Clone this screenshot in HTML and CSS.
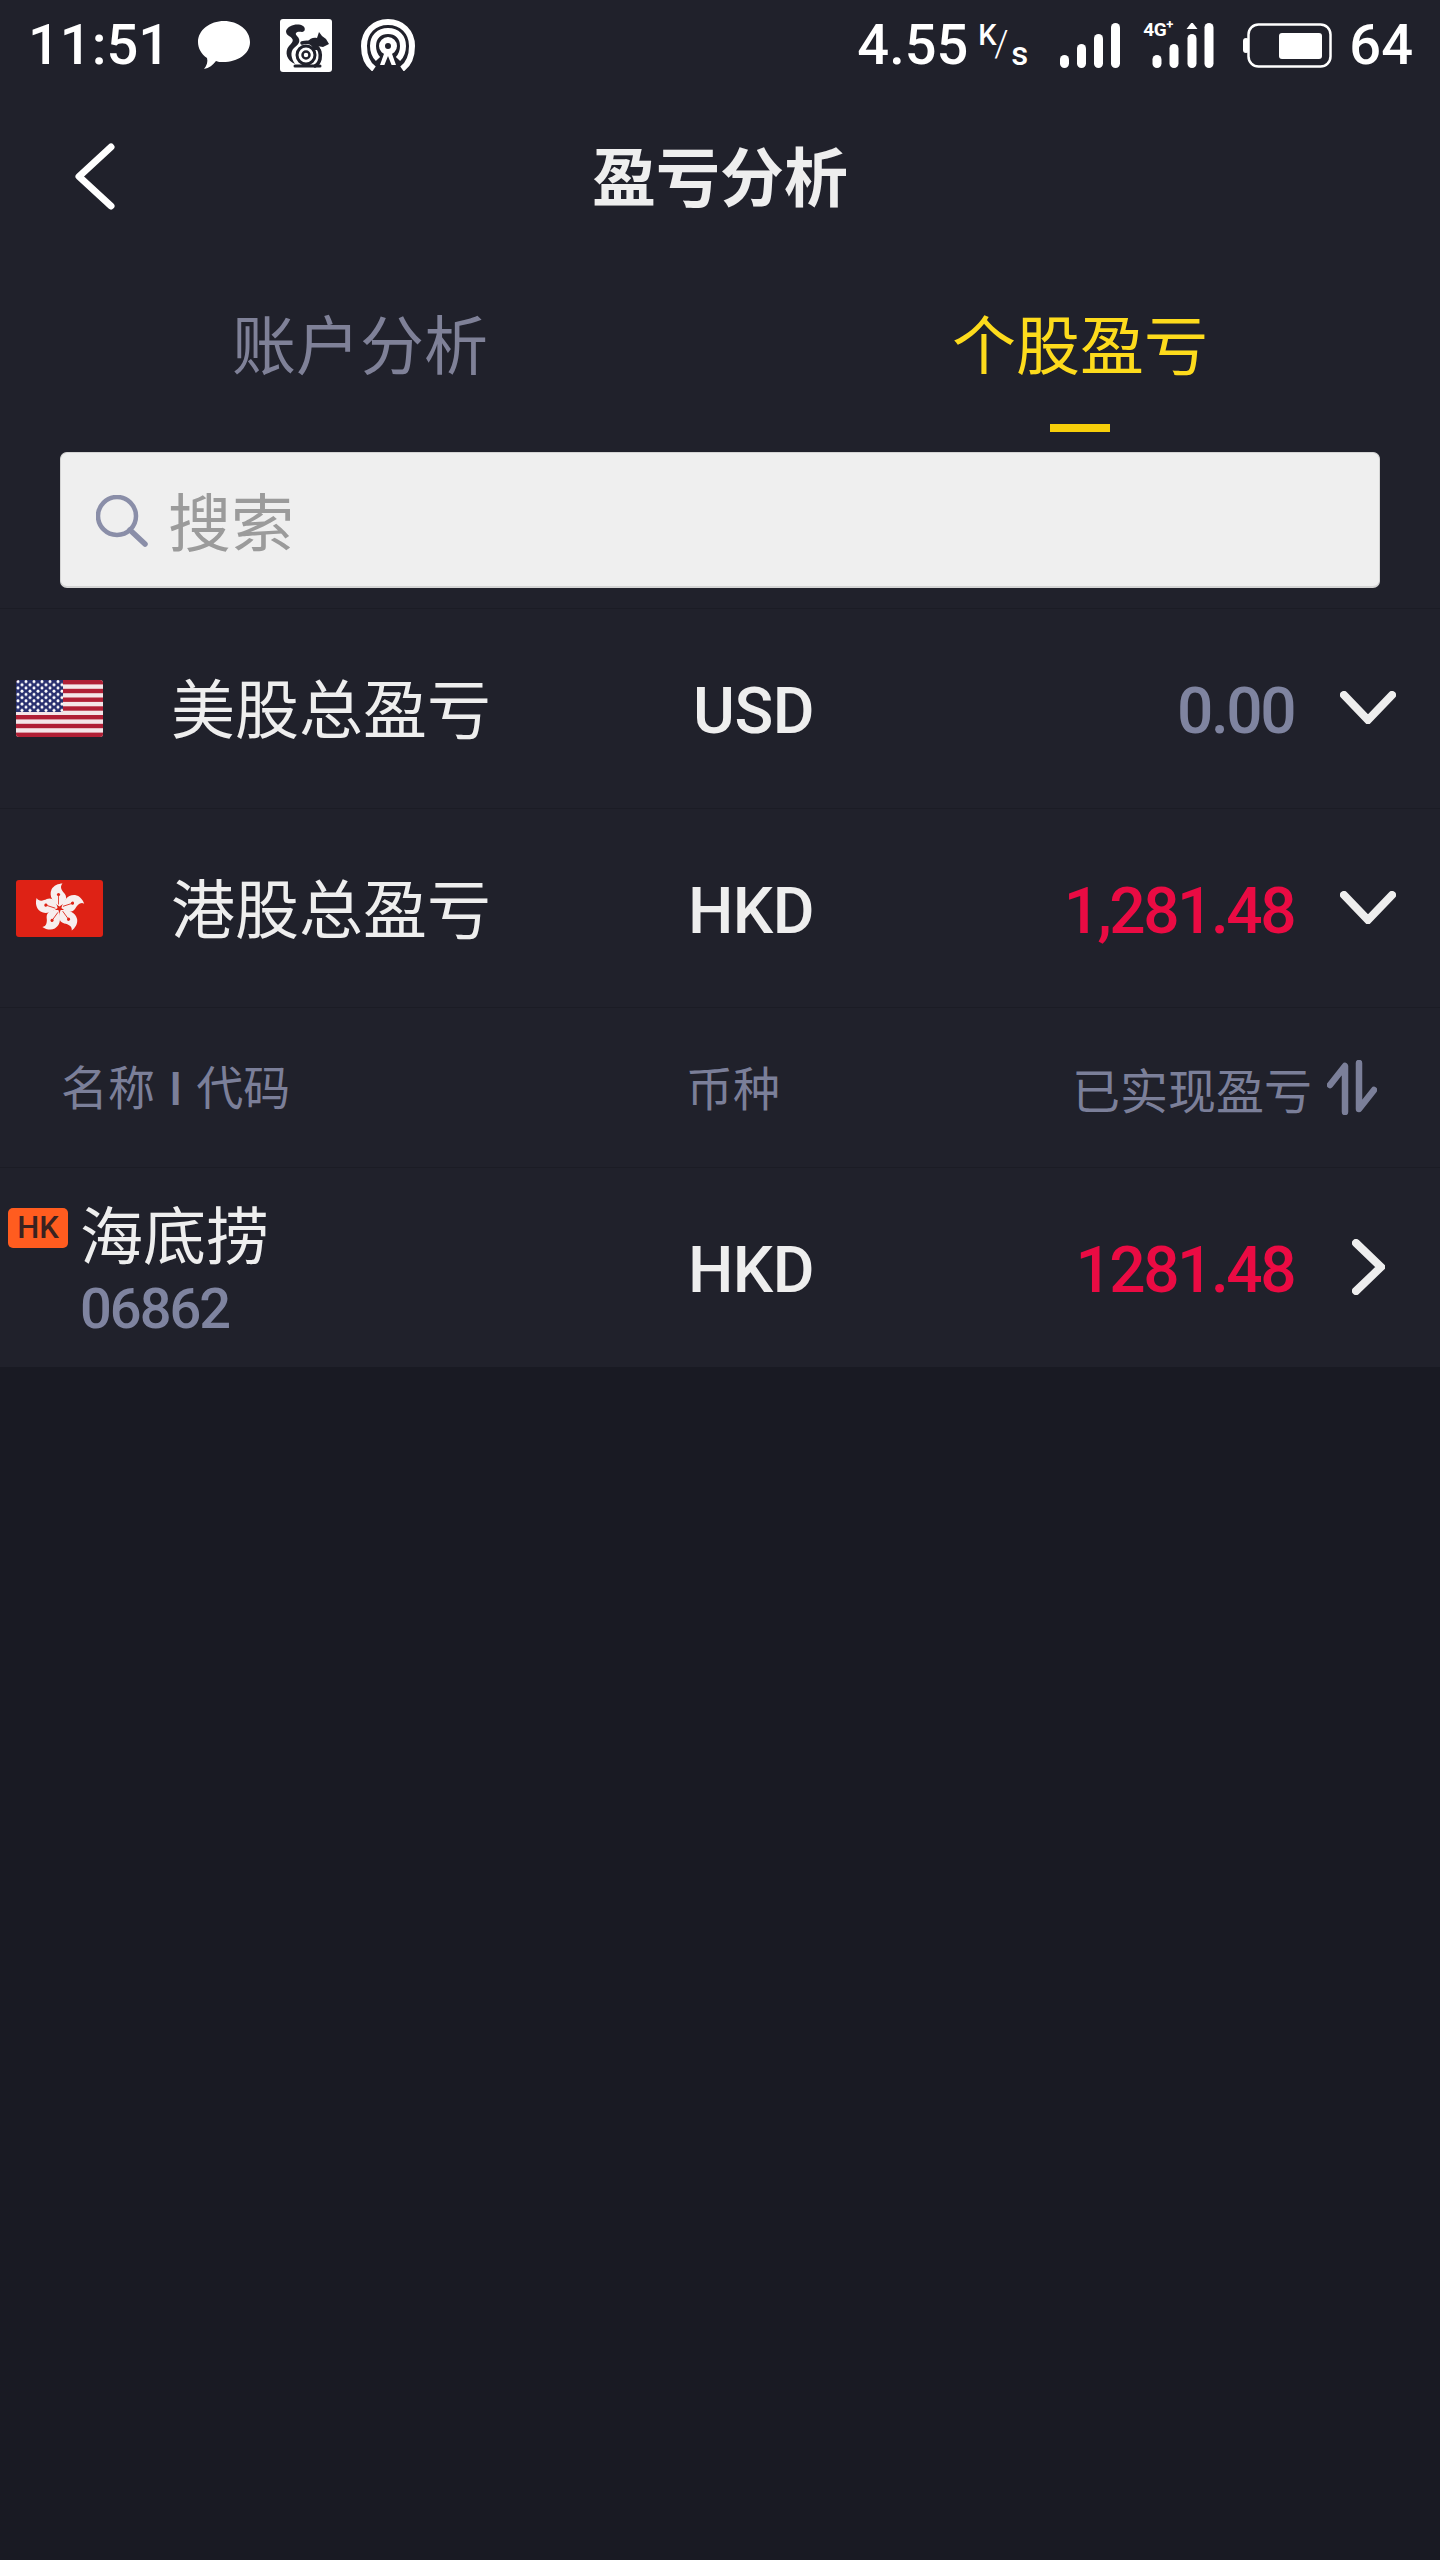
FILE: index.html
```html
<!DOCTYPE html>
<html lang="zh-CN">
<head>
<meta charset="utf-8">
<title>盈亏分析</title>
<link rel="stylesheet" href="styles.css">
</head>
<body>
<div class="app">
  <header class="top">
    <div class="status">
      <div class="status-left">
        <span class="clock">11:51</span>
        <svg class="ic-bubble" viewBox="0 0 52 48"><path d="M26 0C40 0 52 9 52 21C52 33 40 41 25 41C22 41 20 41 18 40C15 44 11 47 6 48C9 44 10 41 9 37C3 33 0 27 0 21C0 9 12 0 26 0Z" fill="#fff"/></svg>
        <svg class="ic-uc" viewBox="0 0 52 53">
          <rect width="52" height="53" rx="3" fill="#fff"/>
          <path d="M6 12C8 6 18 4 23 7C26 9 25 13 22 13C17 12 14 14 17 17C22 22 18 26 14 29C10 33 11 39 15 45C7 42 4 33 9 27C14 22 14 20 9 17C7 16 6 14 6 12Z" fill="#20212b"/>
          <g fill="none" stroke="#20212b" stroke-linecap="round">
            <circle cx="26" cy="36" r="9" stroke-width="3"/>
            <circle cx="26" cy="36" r="3.500" stroke-width="2.500"/>
            <path d="M22 24C32 21 42 28 40 40C39 44 37 46 35 47" stroke-width="3.500"/>
            <path d="M15 47H40" stroke-width="3"/>
          </g>
          <path d="M27 23C30 19 34 18 37 19L39 13L42 17L46 20L49 25L43 28L37 27L41 31L34 31C32 27 30 25 27 23Z" fill="#20212b"/>
        </svg>
        <svg class="ic-cast" viewBox="0 0 54 52">
          <g fill="none" stroke="#fff" stroke-width="6">
            <path d="M13 50C6 45 3 36 3 27C3 13 13 3 27 3C41 3 51 13 51 27C51 36 48 45 41 50"/>
            <path d="M17 40C13 36 12 32 12 27C12 18 18 12 27 12C36 12 42 18 42 27C42 32 41 36 37 40"/>
            <circle cx="27" cy="27" r="6"/>
          </g>
          <path d="M23 35H31L40 52H14Z" fill="#20212b"/>
          <path d="M24 32H30L35 46H19Z" fill="#fff"/>
          <path d="M27 37L33 52H21Z" fill="#20212b"/>
        </svg>
      </div>
      <div class="status-right">
        <span class="speed">4.55</span>
        <span class="unit"><span class="unit-k">K</span><span class="unit-slash">/</span><span class="unit-s">s</span></span>
        <svg class="ic-signal" viewBox="0 0 60 45"><g fill="#fff"><rect x="0" y="32" width="9" height="13" rx="4.500"/><rect x="17" y="21" width="9" height="24" rx="4.500"/><rect x="34" y="11" width="9" height="34" rx="4.500"/><rect x="51" y="0" width="9" height="45" rx="4.500"/></g></svg>
        <span class="net">
          <span class="net-label">4G<sup class="net-plus">+</sup></span>
          <svg class="ic-net" viewBox="0 0 61 45"><g fill="#fff"><rect x="0" y="32" width="9" height="13" rx="4.500"/><rect x="17" y="21" width="9" height="24" rx="4.500"/><rect x="35" y="11" width="9" height="34" rx="4.500"/><rect x="52" y="0" width="9" height="45" rx="4.500"/><path d="M39.500 -1L45 6H34Z"/></g></svg>
        </span>
        <svg class="ic-battery" viewBox="0 0 90 45"><path d="M4 18V27" stroke="#fff" stroke-width="6" stroke-linecap="round" fill="none"/><rect x="6.500" y="1.500" width="82" height="42" rx="10" fill="none" stroke="#fff" stroke-width="2.500"/><rect x="37" y="10" width="43" height="26" rx="3" fill="#fff"/></svg>
        <span class="level">64</span>
      </div>
    </div>
    <nav class="nav">
      <svg class="ic-back" viewBox="0 0 40 67"><path d="M36 4L4 33.500L36 63" fill="none" stroke="#fff" stroke-width="7" stroke-linecap="round" stroke-linejoin="round"/></svg>
      <h1 class="title">盈亏分析</h1>
    </nav>
    <div class="tabs">
      <div class="tab">账户分析</div>
      <div class="tab tab-on">个股盈亏<span class="tab-bar"></span></div>
    </div>
    <div class="search">
      <svg class="ic-search" viewBox="0 0 52 52"><circle cx="21" cy="21" r="19" fill="none" stroke="#8a8ea8" stroke-width="4.500"/><path d="M34 35L49 49" stroke="#8a8ea8" stroke-width="5.500" stroke-linecap="round"/></svg>
      <span class="search-text">搜索</span>
    </div>
  </header>
  <section class="table">
    <div class="row">
      <div class="row-name">
        <svg class="flag" viewBox="0 0 87 57">
          <defs><pattern id="stars" width="8" height="6.400" patternUnits="userSpaceOnUse"><circle cx="2" cy="1.600" r="1.500" fill="#fff"/><circle cx="6" cy="4.800" r="1.500" fill="#fff"/></pattern></defs>
          <rect width="87" height="57" fill="#f4e6e8"/>
          <g fill="#b01f35"><rect y="0" width="87" height="4.400"/><rect y="8.800" width="87" height="4.400"/><rect y="17.500" width="87" height="4.400"/><rect y="26.300" width="87" height="4.400"/><rect y="35" width="87" height="4.400"/><rect y="43.800" width="87" height="4.400"/><rect y="52.600" width="87" height="4.400"/></g>
          <rect width="47" height="32" fill="#28306f"/><rect width="47" height="32" fill="url(#stars)"/>
        </svg>
        <span class="name">美股总盈亏</span>
      </div>
      <span class="cur">USD</span>
      <span class="num num-muted">0.00</span>
      <svg class="ic-down" viewBox="0 0 56 33"><path d="M4 4L28 29L52 4" fill="none" stroke="#eee" stroke-width="8" stroke-linecap="round"/></svg>
    </div>
    <div class="row">
      <div class="row-name">
        <svg class="flag" viewBox="0 0 87 57">
          <rect width="87" height="57" fill="#de2215"/>
          <g transform="translate(43.500 28.500)">
            <g id="petal"><path d="M0 -2C-6 -6 -11 -12 -8 -19C-6 -23 -1 -25 3 -25C0 -22 2 -18 5 -15C9 -10 5 -5 0 -2Z" fill="#f7eeee"/><path d="M-1 -4L-1 -13" stroke="#de2215" stroke-width="0.800"/><circle cx="-1" cy="-14" r="1.600" fill="#de2215"/></g>
            <use href="#petal" transform="rotate(72)"/>
            <use href="#petal" transform="rotate(144)"/>
            <use href="#petal" transform="rotate(216)"/>
            <use href="#petal" transform="rotate(288)"/>
          </g>
        </svg>
        <span class="name">港股总盈亏</span>
      </div>
      <span class="cur">HKD</span>
      <span class="num num-red">1,281.48</span>
      <svg class="ic-down" viewBox="0 0 56 33"><path d="M4 4L28 29L52 4" fill="none" stroke="#eee" stroke-width="8" stroke-linecap="round"/></svg>
    </div>
    <div class="head">
      <span class="head-name">名称<span class="head-sep">I</span>代码</span>
      <span class="head-cur">币种</span>
      <span class="head-pl">已实现盈亏
        <svg class="ic-sort" viewBox="0 0 50 55"><g fill="none" stroke="#7b7f99" stroke-width="6.500" stroke-linecap="round" stroke-linejoin="round"><path d="M3 25L18 6V52"/><path d="M32 3V49L47 30"/></g></svg>
      </span>
    </div>
    <div class="row">
      <div class="stock">
        <span class="badge">HK</span>
        <div class="stock-text">
          <span class="stock-name">海底捞</span>
          <span class="stock-code">06862</span>
        </div>
      </div>
      <span class="cur">HKD</span>
      <span class="num num-red">1281.48</span>
      <svg class="ic-right" viewBox="0 0 33 56"><path d="M4 4L29 28L4 52" fill="none" stroke="#eee" stroke-width="8" stroke-linecap="round"/></svg>
    </div>
  </section>
</div>
</body>
</html>
```
FILE: styles.css
```css
* { box-sizing: border-box; }
html, body { margin: 0; padding: 0; }
body {
  background: #191a23;
  font-family: "Noto Sans CJK SC", "Noto Sans", sans-serif;
  color: #eeeeee;
}
.app { width: 1440px; min-height: 2560px; background: #191a23; }
.top { background: #20212b; padding-bottom: 20px; }

.status {
  height: 90px;
  padding: 0 27px 0 28px;
  display: flex;
  justify-content: space-between;
  align-items: center;
  color: #fff;
  font-family: Roboto, "Liberation Sans", sans-serif;
  font-weight: 500;
}
.status-left, .status-right { display: flex; align-items: center; }
.clock { font-size: 56px; line-height: 60px; }
.ic-bubble { width: 52px; height: 48px; margin-left: 28px; }
.ic-uc { width: 52px; height: 53px; margin-left: 30px; }
.ic-cast { width: 54px; height: 52px; margin-left: 29px; }

.speed { font-size: 56px; line-height: 60px; }
.unit { position: relative; width: 50px; height: 44px; margin-left: 10px; display: block; }
.unit-k { position: absolute; left: 0; top: -4px; font-size: 29px; line-height: 32px; }
.unit-slash { position: absolute; left: 16px; top: 2px; font-size: 36px; line-height: 38px; font-weight: 300; }
.unit-s { position: absolute; right: 0; top: 14px; font-size: 33px; line-height: 34px; }
.ic-signal { width: 60px; height: 45px; margin-left: 32px; }
.net { position: relative; margin-left: 23px; width: 71px; height: 45px; display: block; }
.net-label { position: absolute; left: 0; top: -3px; font-size: 19px; line-height: 20px; font-weight: 700; letter-spacing: -0.500px; }
.net-plus { font-size: 13px; line-height: 0; }
.ic-net { position: absolute; left: 9px; top: 0; width: 62px; height: 45px; }
.ic-battery { width: 90px; height: 45px; margin-left: 28px; }
.level { font-size: 56px; line-height: 60px; margin-left: 17px; }

.nav {
  height: 176px;
  position: relative;
  display: flex;
  align-items: center;
  justify-content: center;
}
.ic-back { position: absolute; left: 75px; top: 53px; width: 40px; height: 67px; }
.title { margin: -10px 0 0; font-size: 64px; line-height: 76px; font-weight: 700; color: #eeeeee; }

.tabs { display: grid; grid-template-columns: 720px 720px; height: 166px; }
.tab {
  position: relative;
  text-align: center;
  font-size: 64px;
  line-height: 76px;
  padding-top: 37px;
  color: #7f8198;
}
.tab-on { color: #fddb1c; }
.tab-bar {
  position: absolute;
  left: 330px;
  bottom: 0;
  width: 60px;
  height: 8px;
  background: #f7cf0a;
}

.search {
  height: 136px;
  margin: 20px 60px 0;
  display: flex;
  align-items: center;
  padding: 0 0 0 35px;
  background: #efefef;
  border: 1px solid #d4d4d4;
  border-bottom-width: 2px;
  border-radius: 7px;
}
.ic-search { width: 52px; height: 52px; margin-top: 2px; }
.search-text { margin-left: 20px; font-size: 63px; line-height: 74px; color: #9b9b9b; margin-top: -2px; }

.table { background: #20212b; }
.row {
  height: 200px;
  border-top: 1px solid #1b1c25;
  display: grid;
  grid-template-columns: 600px 214px 480px 146px;
  align-items: center;
}
.row-name { display: flex; align-items: center; padding-left: 16px; }
.flag { width: 87px; height: 57px; margin-top: -1px; border-radius: 3px; }
.name { margin-left: 68px; font-size: 64px; line-height: 76px; color: #eeeeee; margin-top: -7px; }
.cur, .num {
  font-family: Roboto, "Liberation Sans", sans-serif;
  font-weight: 500;
  font-size: 64px;
  line-height: 76px;
  text-align: right;
  margin-top: 6px;
}
.cur { color: #eeeeee; letter-spacing: -0.500px; }
.num { letter-spacing: -2.500px; }
.num-muted { color: #7f84a0; }
.num-red { color: #ea0b43; }
.ic-down { width: 56px; height: 33px; margin-left: 46px; margin-top: -2px; }
.ic-right { width: 33px; height: 56px; margin-left: 58px; margin-top: -2px; }

.head {
  height: 160px;
  border-top: 1px solid #1b1c25;
  display: grid;
  grid-template-columns: 625px 1fr auto;
  align-items: center;
  padding: 0 63px 0 61px;
  margin-top: -1px;
  font-size: 47px;
  line-height: 56px;
  color: #7b7f99;
}
.head-name { white-space: nowrap; margin-top: -2px; }
.head-sep {
  font-family: Roboto, "Liberation Sans", sans-serif;
  font-weight: 500;
  margin: 0 14px;
}
.head-cur { margin-top: -4px; }
.head-pl { display: flex; align-items: center; gap: 15px; font-size: 48px; }
.ic-sort { width: 50px; height: 55px; }

.stock { display: flex; align-items: flex-start; padding-left: 8px; }
.badge {
  width: 60px;
  height: 40px;
  margin-top: 14px;
  border-radius: 5px;
  background: #ff5c1f;
  color: #3a2220;
  font-family: Roboto, "Liberation Sans", sans-serif;
  font-weight: 500;
  font-size: 31px;
  line-height: 40px;
  text-align: center;
}
.stock-text { display: flex; flex-direction: column; margin-left: 12px; margin-bottom: 3px; }
.stock-name { font-size: 63px; line-height: 70px; margin-top: 3px; color: #eeeeee; }
.stock-code {
  font-family: Roboto, "Liberation Sans", sans-serif;
  font-weight: 500;
  font-size: 56px;
  line-height: 60px;
  margin-top: 12px;
  color: #7f84a0;
  letter-spacing: -2px;
}
```
